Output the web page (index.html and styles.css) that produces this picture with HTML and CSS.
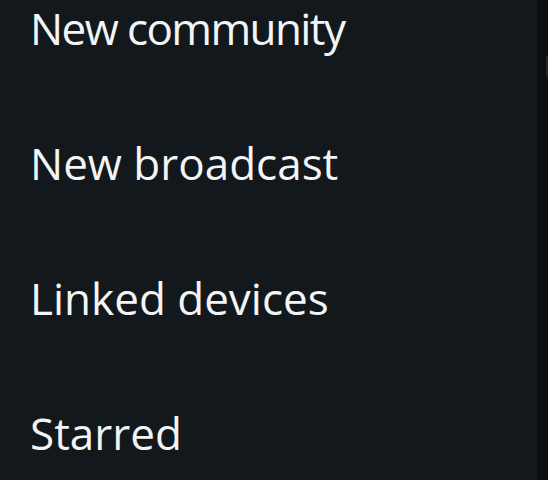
FILE: index.html
```html
<!DOCTYPE html>
<html lang="en">
<head>
  <meta charset="UTF-8" />
  <meta name="viewport" content="width=device-width, initial-scale=1.0"/>
  <title>Menu</title>
  <link rel="stylesheet" href="styles.css">
</head>
<body>

  <div class="screen">
    <!-- overflow menu -->
    <ul class="menu">
      <li class="menu-item tight">New community</li>
      <li class="menu-item">New broadcast</li>
      <li class="menu-item">Linked devices</li>
      <li class="menu-item">Starred</li>
    </ul>

    <!-- edge of the screen behind the menu -->
    <div class="behind">
      <span class="mark"></span>
    </div>
  </div>

</body>
</html>
```

FILE: styles.css
```css
body {
  margin: 0;
  background-color: #0b0f12;
  font-family: 'Open Sans', 'Noto Sans', sans-serif;
  overflow: hidden;
}
.screen {
  display: flex;
  height: 480px;
  overflow: hidden;
}
.menu {
  list-style: none;
  margin: 0;
  padding: 0 0 0 30px;
  width: 507px;
  background-color: #13181c;
  color: #f2f4f5;
}
.menu-item {
  font-size: 44px;
  line-height: 56px;
  height: 135px;
}
.menu-item:last-child { height: auto; }
.tight { letter-spacing: -1.6px; }
.behind {
  flex: 1;
  padding-top: 55px;
  display: flex;
  justify-content: flex-end;
}
.mark {
  width: 2px;
  height: 22px;
  background-color: #1f2428;
  border-radius: 1px 0 0 1px;
}
```
